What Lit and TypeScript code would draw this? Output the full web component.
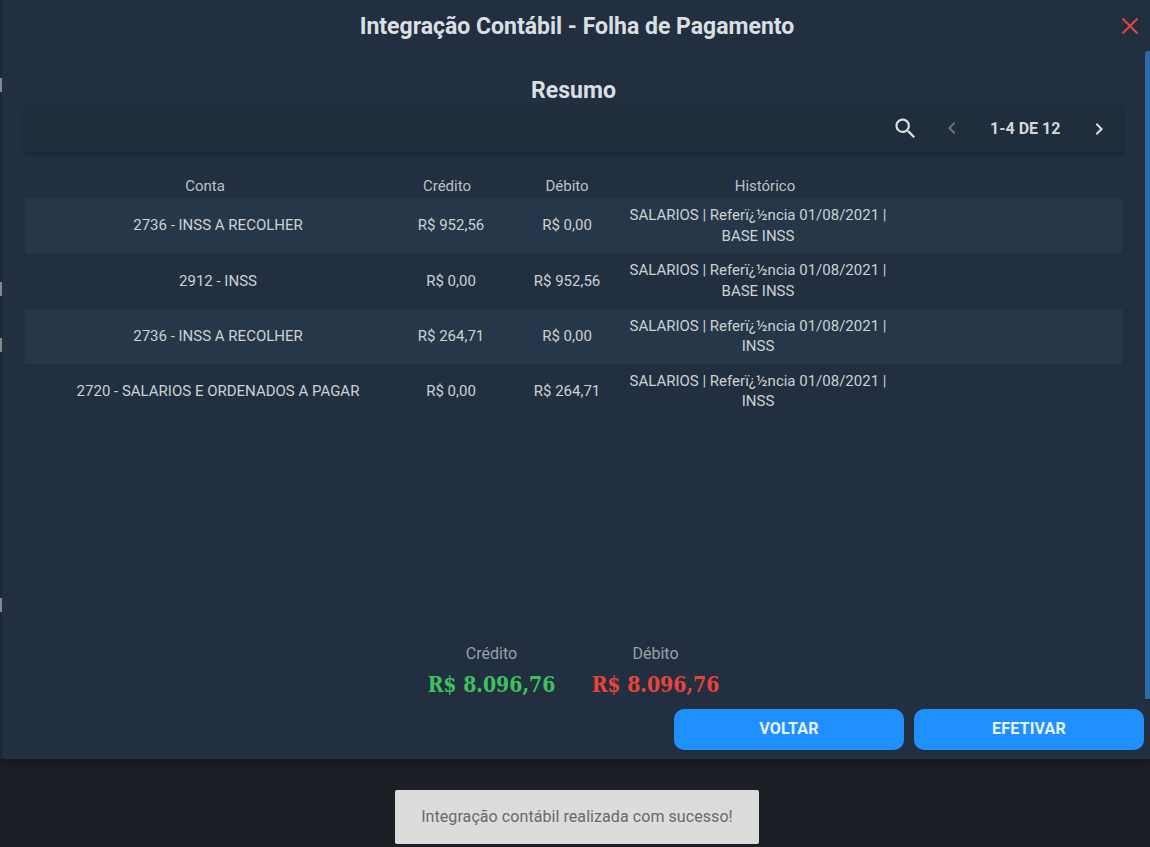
import { LitElement, html, css, svg } from "lit";
import { customElement } from "lit/decorators.js";

const HIST = "SALARIOS | Referï¿½ncia 01/08/2021 |";
const rows = [
  ["2736 - INSS A RECOLHER", "R$ 952,56", "R$ 0,00", "BASE INSS"],
  ["2912 - INSS", "R$ 0,00", "R$ 952,56", "BASE INSS"],
  ["2736 - INSS A RECOLHER", "R$ 264,71", "R$ 0,00", "INSS"],
  ["2720 - SALARIOS E ORDENADOS A PAGAR", "R$ 0,00", "R$ 264,71", "INSS"],
];
const railBits = [78, 282, 338, 598];

const icon = (d: string, cls: string) => html`<svg class=${cls} viewBox="0 0 24 24" fill="currentColor">${svg`<path d=${d}></path>`}</svg>`;
const SEARCH = "M15.5 14h-.79l-.28-.27A6.47 6.47 0 0 0 16 9.5 6.5 6.5 0 1 0 9.5 16c1.61 0 3.09-.59 4.23-1.57l.27.28v.79l5 4.99L20.49 19l-4.99-5zm-6 0C7.01 14 5 11.99 5 9.5S7.01 5 9.5 5 14 7.01 14 9.5 11.99 14 9.5 14z";
const LEFT = "M15.41 7.41 14 6l-6 6 6 6 1.41-1.41L10.83 12z";
const RIGHT = "M10 6 8.59 7.41 13.17 12l-4.58 4.59L10 18l6-6z";

@customElement("app-root")
export class AppRoot extends LitElement {
  static styles = css`
    :host { display: block; position: relative; width: 1150px; height: 847px; overflow: hidden; background: #1c2026; font-family: Roboto, "Liberation Sans", sans-serif; color: #d0d4d8; }
    .rail { position: absolute; left: 0; top: 0; width: 2px; height: 759px; background: #1a2833; }
    .bit { position: absolute; left: 0; width: 2px; height: 14px; background: #84898d; }
    .modal { margin-left: 2px; height: 759px; display: flex; flex-direction: column; background: #212f40; border-bottom-left-radius: 4px; box-shadow: 0 4px 10px rgba(0,0,0,.35); }
    .head { height: 51px; flex: none; display: flex; align-items: center; justify-content: center; position: relative; }
    .title { font-size: 23px; font-weight: 700; color: #dcdfe2; padding: 1px 0 0 2px; }
    .close { position: absolute; left: 1118px; top: 16px; width: 20px; height: 20px; color: #e8443a; }
    .main { flex: 1; min-height: 0; display: flex; }
    .content { flex: 1; min-width: 0; padding: 0 23px; display: flex; flex-direction: column; }
    .thumb { flex: none; width: 5px; background: #2a6cab; border-top-left-radius: 3px; }
    h2 { margin: 0; height: 55px; box-sizing: border-box; padding-top: 26px; text-align: center; font-size: 23px; line-height: 28px; font-weight: 700; color: #dcdfe2; }
    .toolbar { height: 46px; flex: none; display: flex; align-items: center; background: #202d3d; box-shadow: 0 2px 4px rgba(0,0,0,.25); position: relative; }
    .ic { position: absolute; top: 10px; width: 24px; height: 24px; color: #dde0e3; }
    .search { left: 867px; top: 9px; width: 27px; height: 27px; }
    .prev { left: 915px; color: #6b747d; }
    .next { left: 1062px; top: 11px; }
    .pages { position: absolute; left: 965px; top: 0; line-height: 45px; font-size: 16px; font-weight: 700; color: #d3d7db; white-space: nowrap; }
    .table { margin-top: 20px; font-size: 15px; font-weight: 400; line-height: 20.5px; }
    .row { display: grid; grid-template-columns: 386px 95px 122px 260px; align-items: center; text-align: center; color: #cdd1d5; }
    .row.hd { color: #bcc1c6; padding-top: 2px; height: 24px; }
    .row.body { height: 55.25px; }
    .row.body:nth-child(even) { background: #263749; }
    .hd .c1 { padding-right: 26px; }
    .hd .c2 { padding-right: 23px; }
    .hd .c4 { padding-left: 14px; }
    .body .c2 { padding-right: 15px; }
    .totals { margin-top: auto; height: 58px; display: flex; justify-content: center; gap: 37px; }
    .total { width: 127px; text-align: center; }
    .lab { font-size: 16px; line-height: 25px; color: #99a1a9; }
    .val { margin: 0 -20px; font-family: "DejaVu Serif Condensed", "DejaVu Serif", "Liberation Serif", serif; font-size: 23px; font-weight: 700; line-height: 36px; white-space: nowrap; transform: scaleX(.915); }
    .green { color: #3cc35f; }
    .red { color: #e8443a; }
    .foot { height: 60px; flex: none; box-sizing: border-box; border-top: 1px solid #1e2a39; display: flex; justify-content: flex-end; gap: 10px; padding: 9px 6px 0 0; }
    button { all: unset; box-sizing: border-box; width: 230px; height: 41px; padding-bottom: 2px; border-radius: 10px; background: #1e90ff; color: #e6f2fd; text-align: center; font-size: 16px; font-weight: 700; letter-spacing: .2px; }
    .toast { position: absolute; left: 395px; top: 790px; width: 364px; height: 54px; box-sizing: border-box; background: #dcdcdc; border-radius: 2px; text-align: center; line-height: 53px; font-size: 16px; letter-spacing: .07px; color: #666a6e; }
  `;

  render() {
    return html`
      <div class="rail">${railBits.map((y) => html`<div class="bit" style="top:${y}px"></div>`)}</div>
      <div class="modal">
        <div class="head">
          <div class="title">Integração Contábil - Folha de Pagamento</div>
          <svg class="close" viewBox="0 0 20 20" fill="none" stroke="currentColor" stroke-width="2"><path d="M2.5 2.5 17.5 17.5M17.5 2.5 2.5 17.5"></path></svg>
        </div>
        <div class="main">
          <div class="content">
            <h2>Resumo</h2>
            <div class="toolbar">
              ${icon(SEARCH, "ic search")}
              ${icon(LEFT, "ic prev")}
              <span class="pages">1-4 DE 12</span>
              ${icon(RIGHT, "ic next")}
            </div>
            <div class="table">
              <div class="row hd"><div class="c1">Conta</div><div class="c2">Crédito</div><div class="c3">Débito</div><div class="c4">Histórico</div></div>
              ${rows.map((r) => html`
                <div class="row body">
                  <div class="c1">${r[0]}</div><div class="c2">${r[1]}</div><div class="c3">${r[2]}</div><div class="c4">${HIST} ${r[3]}</div>
                </div>`)}
            </div>
            <div class="totals">
              <div class="total"><div class="lab">Crédito</div><div class="val green">R$ 8.096,76</div></div>
              <div class="total"><div class="lab">Débito</div><div class="val red">R$ 8.096,76</div></div>
            </div>
          </div>
          <div class="thumb"></div>
        </div>
        <div class="foot"><button>VOLTAR</button><button>EFETIVAR</button></div>
      </div>
      <div class="toast">Integração contábil realizada com sucesso!</div>
    `;
  }
}
